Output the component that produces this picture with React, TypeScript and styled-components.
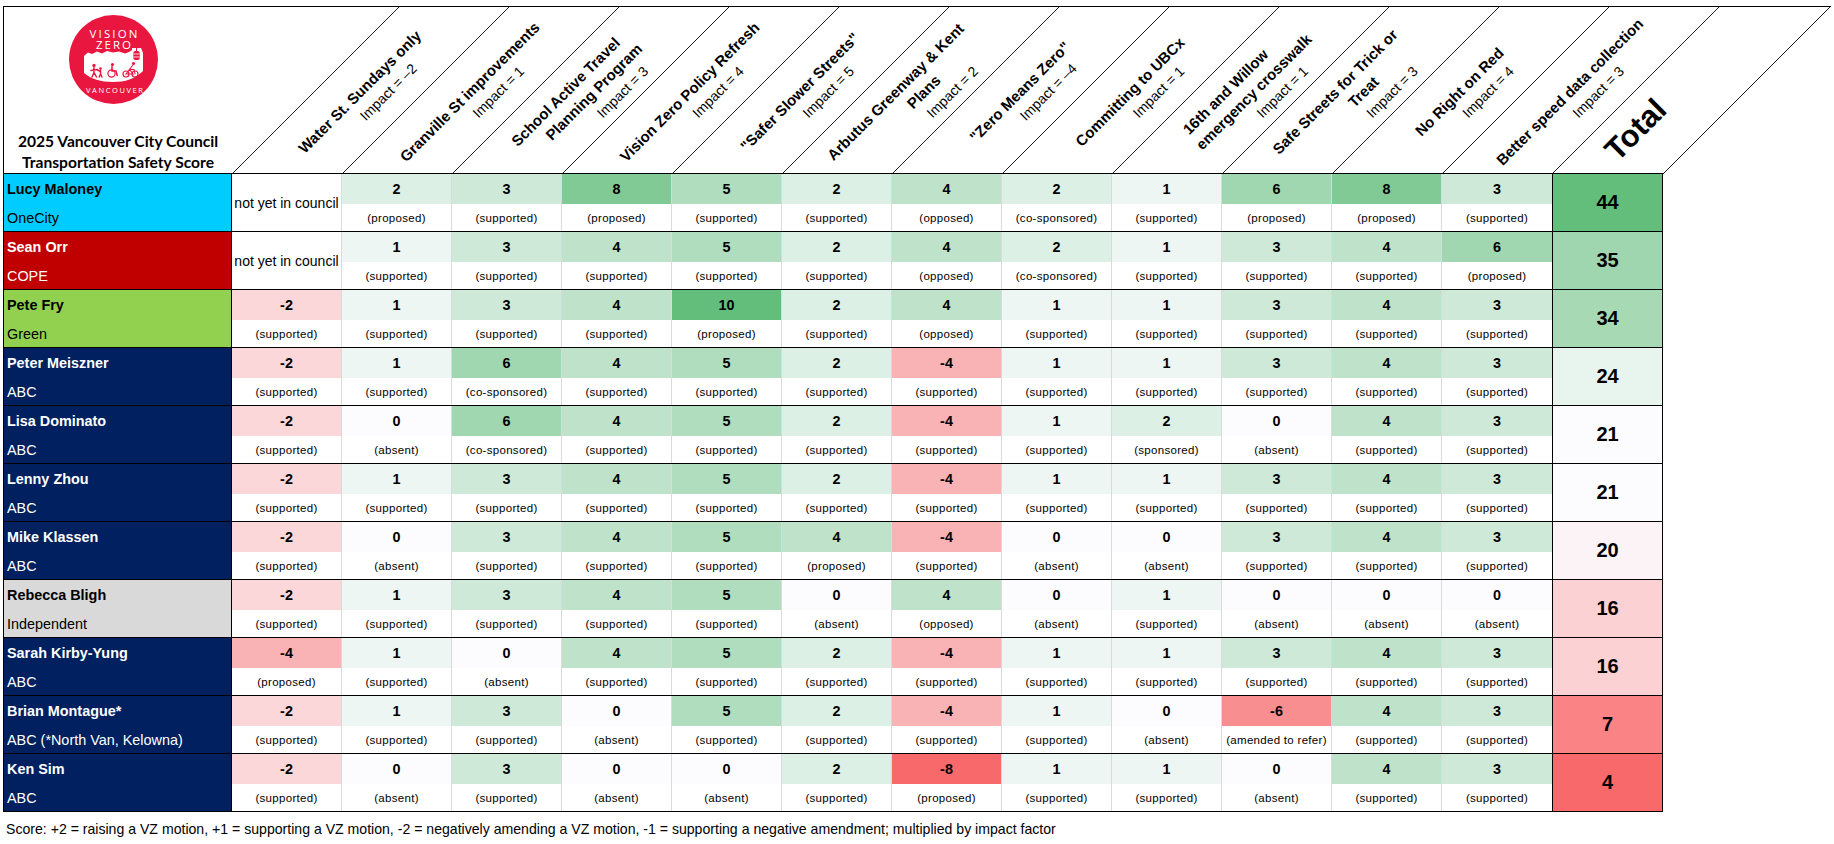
import React from 'react';
import styled, { createGlobalStyle } from 'styled-components';

const NAME_W = 229;
const COL_W = 110;
const TOTAL_W = 111;
const HEAD_H = 166;
const LINE_STEP = 20;

const GlobalStyle = createGlobalStyle`
  html, body { margin: 0; padding: 0; background: #ffffff; }
  body { font-family: "Liberation Sans", Arial, sans-serif; color: #000; }
`;

type Vote = { v: number; note: string } | null;
type Person = {
  name: string;
  party: string;
  bg: string;
  fg: string;
  votes: Vote[];
  total: number;
};

const s = (v: number) => ({ v, note: '(supported)' });
const a = (v: number) => ({ v, note: '(absent)' });
const p = (v: number) => ({ v, note: '(proposed)' });
const o = (v: number) => ({ v, note: '(opposed)' });
const cs = (v: number) => ({ v, note: '(co-sponsored)' });

const NAVY = '#002060';

const people: Person[] = [
  { name: 'Lucy Maloney', party: 'OneCity', bg: '#00CCFF', fg: '#000', total: 44,
    votes: [null, p(2), s(3), p(8), s(5), s(2), o(4), cs(2), s(1), p(6), p(8), s(3)] },
  { name: 'Sean Orr', party: 'COPE', bg: '#C00000', fg: '#fff', total: 35,
    votes: [null, s(1), s(3), s(4), s(5), s(2), o(4), cs(2), s(1), s(3), s(4), p(6)] },
  { name: 'Pete Fry', party: 'Green', bg: '#92D050', fg: '#000', total: 34,
    votes: [s(-2), s(1), s(3), s(4), p(10), s(2), o(4), s(1), s(1), s(3), s(4), s(3)] },
  { name: 'Peter Meiszner', party: 'ABC', bg: NAVY, fg: '#fff', total: 24,
    votes: [s(-2), s(1), cs(6), s(4), s(5), s(2), s(-4), s(1), s(1), s(3), s(4), s(3)] },
  { name: 'Lisa Dominato', party: 'ABC', bg: NAVY, fg: '#fff', total: 21,
    votes: [s(-2), a(0), cs(6), s(4), s(5), s(2), s(-4), s(1), { v: 2, note: '(sponsored)' }, a(0), s(4), s(3)] },
  { name: 'Lenny Zhou', party: 'ABC', bg: NAVY, fg: '#fff', total: 21,
    votes: [s(-2), s(1), s(3), s(4), s(5), s(2), s(-4), s(1), s(1), s(3), s(4), s(3)] },
  { name: 'Mike Klassen', party: 'ABC', bg: NAVY, fg: '#fff', total: 20,
    votes: [s(-2), a(0), s(3), s(4), s(5), p(4), s(-4), a(0), a(0), s(3), s(4), s(3)] },
  { name: 'Rebecca Bligh', party: 'Independent', bg: '#D9D9D9', fg: '#000', total: 16,
    votes: [s(-2), s(1), s(3), s(4), s(5), a(0), o(4), a(0), s(1), a(0), a(0), a(0)] },
  { name: 'Sarah Kirby-Yung', party: 'ABC', bg: NAVY, fg: '#fff', total: 16,
    votes: [p(-4), s(1), a(0), s(4), s(5), s(2), s(-4), s(1), s(1), s(3), s(4), s(3)] },
  { name: 'Brian Montague*', party: 'ABC (*North Van, Kelowna)', bg: NAVY, fg: '#fff', total: 7,
    votes: [s(-2), s(1), s(3), a(0), s(5), s(2), s(-4), s(1), a(0), { v: -6, note: '(amended to refer)' }, s(4), s(3)] },
  { name: 'Ken Sim', party: 'ABC', bg: NAVY, fg: '#fff', total: 4,
    votes: [s(-2), a(0), s(3), a(0), a(0), s(2), p(-8), s(1), s(1), a(0), s(4), s(3)] },
];

const motions: { lines: string[]; impact: string }[] = [
  { lines: ['Water St. Sundays only'], impact: 'Impact = \u20132' },
  { lines: ['Granville St improvements'], impact: 'Impact = 1' },
  { lines: ['School Active Travel', 'Planning Program'], impact: 'Impact = 3' },
  { lines: ['Vision Zero Policy Refresh'], impact: 'Impact = 4' },
  { lines: ['"Safer Slower Streets"'], impact: 'Impact = 5' },
  { lines: ['Arbutus Greenway & Kent', 'Plans'], impact: 'Impact = 2' },
  { lines: ['"Zero Means Zero"'], impact: 'Impact = \u20134' },
  { lines: ['Committing to UBCx'], impact: 'Impact = 1' },
  { lines: ['16th and Willow', 'emergency crosswalk'], impact: 'Impact = 1' },
  { lines: ['Safe Streets for Trick or', 'Treat'], impact: 'Impact = 3' },
  { lines: ['No Right on Red'], impact: 'Impact = 4' },
  { lines: ['Better speed data collection'], impact: 'Impact = 3' },
];

const WHITE = [252, 252, 255];
const GREEN = [99, 190, 123];
const RED = [248, 105, 107];
const mix = (x: number[], y: number[], t: number) =>
  `rgb(${x.map((c, i) => Math.round(c + (y[i] - c) * t)).join(',')})`;
const scoreColor = (v: number) => (v >= 0 ? mix(WHITE, GREEN, v / 10) : mix(WHITE, RED, -v / 8));
const totalColor = (v: number) =>
  v >= 21 ? mix(WHITE, GREEN, (v - 21) / 23) : mix(WHITE, RED, (21 - v) / 17);

/* ---------- layout ---------- */

const Page = styled.div`
  padding: 6px 0 0 3px;
`;

const Sheet = styled.div`
  display: flex;
  flex-direction: column;
  width: max-content;
`;

const HeaderRow = styled.div`
  display: flex;
  height: ${HEAD_H}px;
  border-top: 1px solid #000;
  width: ${NAME_W + 12 * COL_W + TOTAL_W + HEAD_H + 1}px;
`;

const TitleCell = styled.div`
  width: ${NAME_W}px;
  flex-shrink: 0;
  box-sizing: border-box;
  border-left: 1px solid #000;
  display: flex;
  flex-direction: column;
  align-items: center;
  padding-top: 8px;
`;

const LogoSvg = styled.svg`
  display: block;
  margin-right: 9px;
`;

const Title = styled.div`
  margin-top: auto;
  font-family: Lato, "Open Sans", sans-serif;
  font-weight: 700;
  font-size: 15.6px;
  line-height: 21px;
  text-align: center;
  white-space: nowrap;
`;

const HeadCell = styled.div<{ $w: number }>`
  position: relative;
  width: ${(pr) => pr.$w}px;
  flex-shrink: 0;
  display: flex;
  align-items: center;
  justify-content: center;
`;

const Diagonal = styled.svg`
  position: absolute;
  left: 0;
  bottom: -1px;
  overflow: visible;
  pointer-events: none;
`;

const Label = styled.div`
  flex-shrink: 0;
  white-space: nowrap;
  text-align: center;
  line-height: ${LINE_STEP}px;
  transform: translate(87px, 2px) rotate(-45deg);
`;

const LabelLine = styled.div<{ $shift: number; $bold: boolean }>`
  font-weight: ${(pr) => (pr.$bold ? 700 : 400)};
  font-size: ${(pr) => (pr.$bold ? '15px' : '14px')};
  transform: translateX(${(pr) => pr.$shift}px);
`;

const TotalLabel = styled.div`
  flex-shrink: 0;
  font-weight: 700;
  font-size: 31px;
  line-height: 34px;
  transform: translate(28px, 40px) rotate(-45deg);
`;

const Body = styled.div`
  border-top: 1px solid #000;
  width: ${NAME_W + 12 * COL_W + TOTAL_W}px;
`;

const Row = styled.div`
  display: flex;
  height: 58px;
  box-sizing: border-box;
  border-bottom: 1px solid #000;
`;

const NameCell = styled.div<{ $bg: string; $fg: string }>`
  width: ${NAME_W}px;
  flex-shrink: 0;
  box-sizing: border-box;
  border-left: 1px solid #000;
  border-right: 1px solid #000;
  background: ${(pr) => pr.$bg};
  color: ${(pr) => pr.$fg};
  display: grid;
  grid-template-rows: 30px 27px;
  align-items: center;
  padding-left: 3px;
  font-size: 14.4px;
  white-space: nowrap;
`;

const PersonName = styled.div`
  font-weight: 700;
`;

const PartyName = styled.div`
  font-weight: 400;
`;

const VoteCell = styled.div<{ $last: boolean }>`
  width: ${COL_W}px;
  flex-shrink: 0;
  box-sizing: border-box;
  border-right: ${(pr) => (pr.$last ? 'none' : '1px solid #dadada')};
  display: grid;
  grid-template-rows: 30px 27px;
`;

const Score = styled.div`
  display: flex;
  align-items: center;
  justify-content: center;
  font-weight: 700;
  font-size: 14.4px;
`;

const Note = styled.div`
  display: flex;
  align-items: center;
  justify-content: center;
  background: #fff;
  font-size: 11.5px;
  letter-spacing: 0.3px;
  white-space: nowrap;
`;

const AbsentCell = styled.div`
  width: ${COL_W}px;
  flex-shrink: 0;
  box-sizing: border-box;
  border-right: 1px solid #dadada;
  display: flex;
  align-items: center;
  justify-content: center;
  font-size: 14px;
  white-space: nowrap;
`;

const TotalCell = styled.div`
  width: ${TOTAL_W}px;
  flex-shrink: 0;
  box-sizing: border-box;
  border-left: 1px solid #000;
  border-right: 1px solid #000;
  display: flex;
  align-items: center;
  justify-content: center;
  font-weight: 700;
  font-size: 20px;
`;

const Footer = styled.div`
  padding: 9px 0 0 3px;
  font-size: 14.1px;
  line-height: 16px;
  white-space: nowrap;
`;

/* ---------- drawings ---------- */

const LOGO_RED = '#E9173F';

const Logo = () => (
  <LogoSvg viewBox="0 0 89 89" width={89} height={89}>
    <circle cx="44.5" cy="44.5" r="44.5" fill={LOGO_RED} />
    <text x="44.5" y="22.5" textAnchor="middle" fill="#fff" fontSize="11.5"
      fontFamily="'Open Sans', sans-serif" textLength="48" lengthAdjust="spacing">VISION</text>
    <text x="44.5" y="34" textAnchor="middle" fill="#fff" fontSize="11.5"
      fontFamily="'Open Sans', sans-serif" textLength="35" lengthAdjust="spacing">ZERO</text>
    <path
      d="M15,41 L19,37.5 L23,39 L28,36.5 L33,38.5 L38,36 L44,37.5 L50,36.5 L56,38.5 L60,37 L63,35 L63,33 L72,33 L74,38 L74,56 C66,64 56,67 44,67 C32,67 22,64 15,58 Z"
      fill="#fff"
    />
    <line x1="67.5" y1="33" x2="67.5" y2="36" stroke={LOGO_RED} strokeWidth="1" />
    <rect x="64.3" y="36" width="6.5" height="9" rx="2" fill={LOGO_RED} />
    <line x1="64.3" y1="39" x2="70.8" y2="39" stroke="#fff" strokeWidth="0.8" />
    <line x1="64.3" y1="42" x2="70.8" y2="42" stroke="#fff" strokeWidth="0.8" />
    <g stroke={LOGO_RED} strokeWidth="1.5" strokeLinecap="round" fill="none">
      <path d="M25,52.5 L25,57.5 M25,57.5 L23,62 M25,57.5 L27.5,62 M22,55.5 L28.5,54.5" />
      <path d="M31.5,55.5 L31.5,59 M31.5,59 L30.2,62 M31.5,59 L33,62 M28.5,55 L31.5,56.5" />
      <circle cx="42.5" cy="58.5" r="3.6" strokeWidth="1.2" />
      <path d="M43,51.5 L43,56 L47,56 L48.2,60.5" />
      <circle cx="57" cy="59" r="3" strokeWidth="1.2" />
      <circle cx="66" cy="59" r="3" strokeWidth="1.2" />
      <path d="M57,59 L60.5,54.5 L64,59 Z M60.5,54.5 L65,54.5 L66,59 M63.5,50.5 L60.5,54.5" strokeWidth="1.1" />
    </g>
    <g fill={LOGO_RED}>
      <circle cx="25" cy="50.4" r="1.7" />
      <circle cx="31.5" cy="53.6" r="1.3" />
      <circle cx="43.5" cy="49.5" r="1.6" />
      <circle cx="64.5" cy="48.5" r="1.6" />
    </g>
    <text x="45.5" y="78" textAnchor="middle" fill="#fff" fontSize="7.5"
      fontFamily="'Open Sans', sans-serif" textLength="57" lengthAdjust="spacing">VANCOUVER</text>
  </LogoSvg>
);

const DiagLine = () => (
  <Diagonal width={HEAD_H + 2} height={HEAD_H + 2}>
    <line x1="0" y1={HEAD_H + 2} x2={HEAD_H + 2} y2="0" stroke="#000" strokeWidth="0.9" />
  </Diagonal>
);

const MotionLabel = ({ lines, impact }: { lines: string[]; impact: string }) => {
  const all = [...lines.map((t) => ({ t, bold: true })), { t: impact, bold: false }];
  const mid = (all.length - 1) / 2;
  return (
    <Label>
      {all.map((l, k) => (
        <LabelLine key={k} $bold={l.bold} $shift={(k - mid) * LINE_STEP}>
          {l.t}
        </LabelLine>
      ))}
    </Label>
  );
};

/* ---------- app ---------- */

export default function App() {
  return (
    <>
      <GlobalStyle />
      <Page>
        <Sheet>
          <HeaderRow>
            <TitleCell>
              <Logo />
              <Title>
                2025 Vancouver City Council
                <br />
                Transportation Safety Score
              </Title>
            </TitleCell>
            {motions.map((m, i) => (
              <HeadCell key={i} $w={COL_W}>
                <DiagLine />
                <MotionLabel lines={m.lines} impact={m.impact} />
              </HeadCell>
            ))}
            <HeadCell $w={TOTAL_W}>
              <DiagLine />
              <TotalLabel>Total</TotalLabel>
            </HeadCell>
            <HeadCell $w={HEAD_H}>
              <DiagLine />
            </HeadCell>
          </HeaderRow>
          <Body>
            {people.map((pe) => (
              <Row key={pe.name}>
                <NameCell $bg={pe.bg} $fg={pe.fg}>
                  <PersonName>{pe.name}</PersonName>
                  <PartyName>{pe.party}</PartyName>
                </NameCell>
                {pe.votes.map((vt, i) =>
                  vt === null ? (
                    <AbsentCell key={i}>not yet in council</AbsentCell>
                  ) : (
                    <VoteCell key={i} $last={i === 11}>
                      <Score style={{ background: scoreColor(vt.v) }}>{vt.v}</Score>
                      <Note>{vt.note}</Note>
                    </VoteCell>
                  )
                )}
                <TotalCell style={{ background: totalColor(pe.total) }}>{pe.total}</TotalCell>
              </Row>
            ))}
          </Body>
          <Footer>
            Score: +2 = raising a VZ motion, +1 = supporting a VZ motion, -2 = negatively amending a VZ
            motion, -1 = supporting a negative amendment; multiplied by impact factor
          </Footer>
        </Sheet>
      </Page>
    </>
  );
}
